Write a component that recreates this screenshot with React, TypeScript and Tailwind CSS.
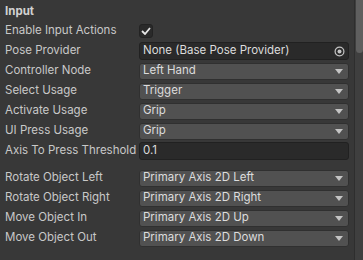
import React from 'react';

const font = { fontFamily: 'Inter, "Noto Sans", sans-serif' };

function Caret() {
  return (
    <svg width="8" height="5" viewBox="0 0 8 5" className="shrink-0">
      <path d="M0 0 H8 L4 5 Z" fill="#c4c4c4" />
    </svg>
  );
}

function Row({ label, children }: { label: string; children: React.ReactNode }) {
  return (
    <div className="flex h-5 items-center">
      <div className="w-[139px] shrink-0 pl-[5px] text-[11.5px] text-[#c8c8c8] whitespace-nowrap">{label}</div>
      <div className="flex-1 pr-[14px]">{children}</div>
    </div>
  );
}

function Popup({ value }: { value: string }) {
  return (
    <div className="flex h-[17px] items-center justify-between rounded-[3px] border border-[#303030] bg-[#515151] pl-[3px] pr-[5px] text-[11.5px] text-[#dcdcdc]">
      <span>{value}</span>
      <Caret />
    </div>
  );
}

export default function App() {
  const axisRows = [
    ['Rotate Object Left', 'Primary Axis 2D Left'],
    ['Rotate Object Right', 'Primary Axis 2D Right'],
    ['Move Object In', 'Primary Axis 2D Up'],
    ['Move Object Out', 'Primary Axis 2D Down'],
  ];

  return (
    <div className="relative h-[260px] w-[363px] overflow-hidden bg-[#383838] pt-[2px]" style={font}>
      <div className="flex h-[19px] items-center pl-[5px] text-[11.5px] font-bold text-[#d2d2d2]">Input</div>

      <Row label="Enable Input Actions">
        <div className="flex h-[14px] w-[14px] items-center justify-center rounded-[3px] border border-[#232323] bg-[#2a2a2a]">
          <svg width="10" height="8" viewBox="0 0 10 8">
            <path d="M1 4 L4 7 L9 1" stroke="#e6e6e6" strokeWidth="1.8" fill="none" />
          </svg>
        </div>
      </Row>

      <Row label="Pose Provider">
        <div className="flex h-[18px] items-center justify-between rounded-[3px] border border-[#212121] bg-[#2a2a2a] pl-[3px] text-[11.5px] text-[#dcdcdc]">
          <span>None (Base Pose Provider)</span>
          <div className="flex h-full w-[17px] items-center justify-center">
            <svg width="11" height="11" viewBox="0 0 11 11">
              <circle cx="5.5" cy="5.5" r="4.4" stroke="#c4c4c4" strokeWidth="1.2" fill="none" />
              <circle cx="5.5" cy="5.5" r="2" fill="#c4c4c4" />
            </svg>
          </div>
        </div>
      </Row>

      <Row label="Controller Node"><Popup value="Left Hand" /></Row>
      <Row label="Select Usage"><Popup value="Trigger" /></Row>
      <Row label="Activate Usage"><Popup value="Grip" /></Row>
      <Row label="UI Press Usage"><Popup value="Grip" /></Row>

      <Row label="Axis To Press Threshold">
        <div className="flex h-[18px] items-center rounded-[3px] border border-[#212121] bg-[#2a2a2a] pl-[3px] text-[11.5px] text-[#dcdcdc]">
          0.1
        </div>
      </Row>

      <div className="h-[7px]" />

      {axisRows.map(([l, v]) => (
        <Row key={l} label={l}><Popup value={v} /></Row>
      ))}

      <div className="pl-[5px] pt-[10px] text-[11.5px] font-bold leading-[14px] text-[#d2d2d2]">Model</div>

      {/* scrollbar */}
      <div className="absolute right-0 top-0 h-full w-[9px] border-l border-[#2e2e2e] bg-[#3f3f3f]">
        <div className="mx-auto h-[53px] w-[7px] rounded-b-[4px] bg-[#5f5f5f]" />
      </div>
    </div>
  );
}
